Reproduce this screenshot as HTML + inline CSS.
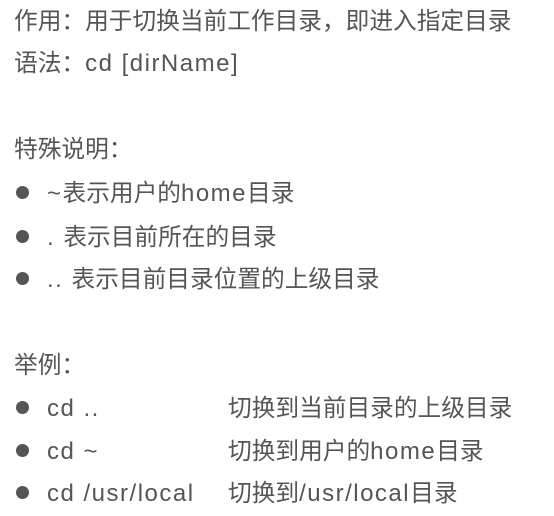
<!DOCTYPE html>
<html><head><meta charset="utf-8"><style>
body{margin:0;width:554px;height:516px;background:#fff;position:relative;overflow:hidden;font-family:"Liberation Sans","Noto Sans CJK SC",sans-serif;font-size:23.7px;color:#555;}
.l{position:absolute;left:14px;line-height:30px;white-space:nowrap;margin-top:2px;}
.b{left:47px;}
.c{left:228px;}
.e{font-size:24px;letter-spacing:1.5px;}
.d{position:absolute;left:16px;width:13px;height:13px;border-radius:50%;background:#555;}
</style></head><body>
<div class="l" style="top:5px">作用：用于切换当前工作目录，即进入指定目录</div>
<div class="l" style="top:47px">语法：<span class="e">cd [dirName]</span></div>
<div class="l" style="top:133px">特殊说明：</div>
<div class="d" style="top:186px"></div><div class="l b" style="top:177px"><span class="e">~</span>表示用户的<span class="e">home</span>目录</div>
<div class="d" style="top:230px"></div><div class="l b" style="top:221px"><span class="e">. </span>表示目前所在的目录</div>
<div class="d" style="top:272px"></div><div class="l b" style="top:263px"><span class="e">.. </span>表示目前目录位置的上级目录</div>
<div class="l" style="top:349px">举例：</div>
<div class="d" style="top:401px"></div><div class="l b e" style="top:392px">cd ..</div><div class="l c" style="top:392px">切换到当前目录的上级目录</div>
<div class="d" style="top:444px"></div><div class="l b e" style="top:435px">cd ~</div><div class="l c" style="top:435px">切换到用户的<span class="e">home</span>目录</div>
<div class="d" style="top:486px"></div><div class="l b e" style="top:477px">cd /usr/local</div><div class="l c" style="top:477px">切换到<span class="e">/usr/local</span>目录</div>
</body></html>
